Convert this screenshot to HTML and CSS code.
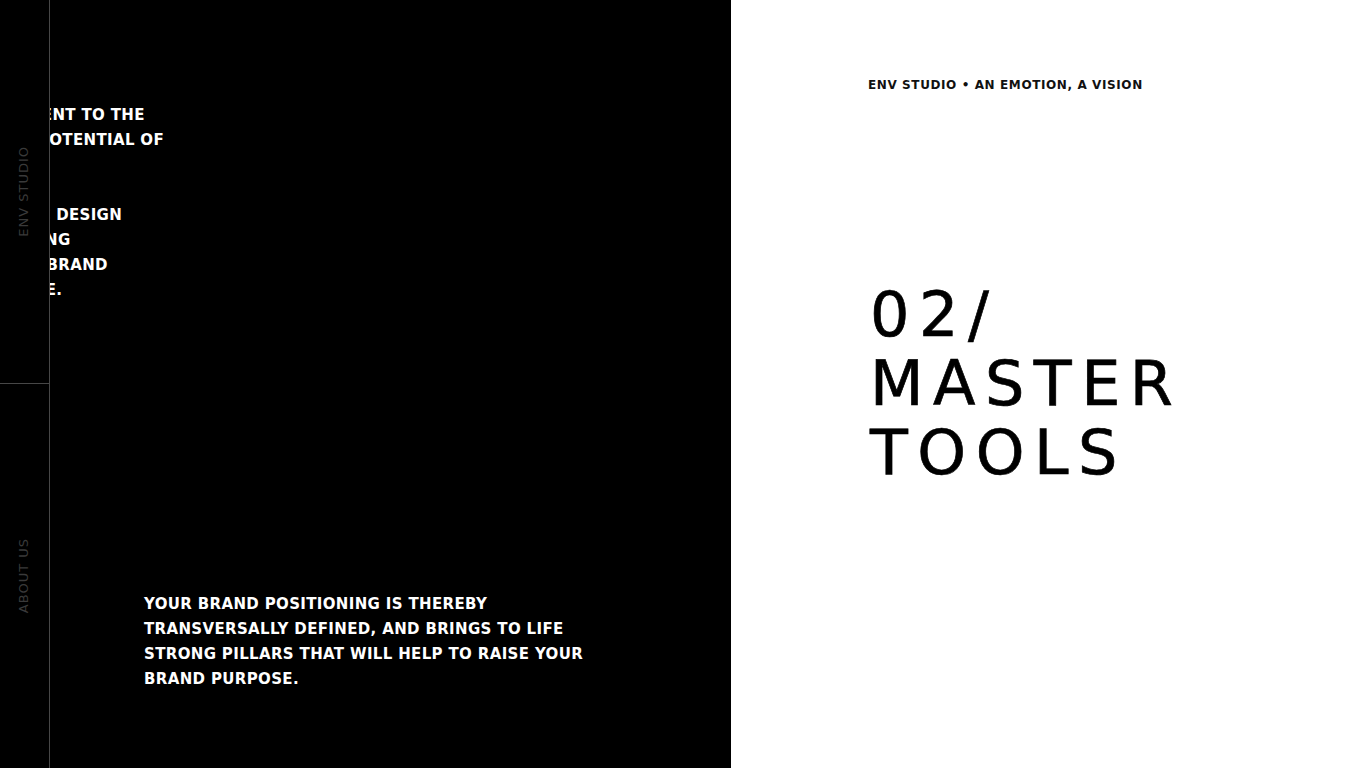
FILE: index.html
```html
<!DOCTYPE html>
<html lang="en">
<head>
<meta charset="utf-8">
<title>ENV Studio — Master Tools</title>
<link rel="stylesheet" href="styles.css">
</head>
<body>
<main class="page">
  <section class="dark">
    <nav class="rail">
      <div class="rail-cell rail-cell--top"><span class="rail-label">ENV STUDIO</span></div>
      <div class="rail-cell"><span class="rail-label">ABOUT US</span></div>
    </nav>
    <div class="content">
      <div class="intro">
        <p class="intro-para">COMMITMENT TO THE<br>AND THE POTENTIAL OF<br>BRANDS.</p>
        <p class="intro-para">STRATEGIC DESIGN<br>POSITIONING<br>WITH THE BRAND<br>NEW VALUE.</p>
      </div>
      <p class="statement">YOUR BRAND POSITIONING IS THEREBY<br>TRANSVERSALLY DEFINED, AND BRINGS TO LIFE<br>STRONG PILLARS THAT WILL HELP TO RAISE YOUR<br>BRAND PURPOSE.</p>
    </div>
  </section>
  <section class="light">
    <p class="tagline">ENV STUDIO • AN EMOTION, A VISION</p>
    <h1 class="title">02/<br>MASTER<br>TOOLS</h1>
  </section>
</main>
</body>
</html>
```

FILE: styles.css
```css
* { box-sizing: border-box; }
html, body { margin: 0; padding: 0; }
body {
  width: 1366px;
  height: 768px;
  overflow: hidden;
  background: #fff;
  font-family: "DejaVu Sans", "Liberation Sans", sans-serif;
}
.page {
  display: flex;
  width: 1366px;
  height: 768px;
}
.dark {
  width: 731px;
  height: 768px;
  background: #000;
  display: flex;
  overflow: hidden;
}
.rail {
  position: relative;
  z-index: 2;
  width: 50px;
  flex: none;
  background: #000;
  border-right: 1px solid #474747;
  display: flex;
  flex-direction: column;
}
.rail-cell {
  flex: 1;
  display: flex;
  align-items: center;
  justify-content: center;
}
.rail-cell--top {
  flex: none;
  height: 384px;
  border-bottom: 1px solid #474747;
}
.rail-label {
  writing-mode: vertical-rl;
  transform: rotate(180deg);
  font-size: 13px;
  letter-spacing: 1px;
  color: #3a3a3a;
  white-space: nowrap;
  padding-left: 2px;
}
.content {
  position: relative;
  z-index: 1;
  flex: 1;
  display: flex;
  flex-direction: column;
  justify-content: space-between;
  padding: 103px 0 76px;
}
.intro {
  margin-left: -95px;
}
.intro-para, .statement {
  margin: 0;
  color: #fff;
  font-weight: bold;
  font-size: 15px;
  line-height: 25px;
  letter-spacing: 0.35px;
  white-space: nowrap;
}
.intro-para + .intro-para { margin-top: 25px; }
.statement {
  margin-left: 94px;
}
.light {
  flex: 1;
  padding: 76px 0 0 137px;
  display: flex;
  flex-direction: column;
}
.tagline {
  margin: 0;
  font-size: 12px;
  line-height: 18px;
  font-weight: bold;
  letter-spacing: 0.6px;
  color: #111;
}
.title {
  margin: 186px 0 0 2px;
  font-size: 62px;
  line-height: 69px;
  font-weight: normal;
  letter-spacing: 9.5px;
  color: #000;
  -webkit-text-stroke: 0.7px #000;
}
```
